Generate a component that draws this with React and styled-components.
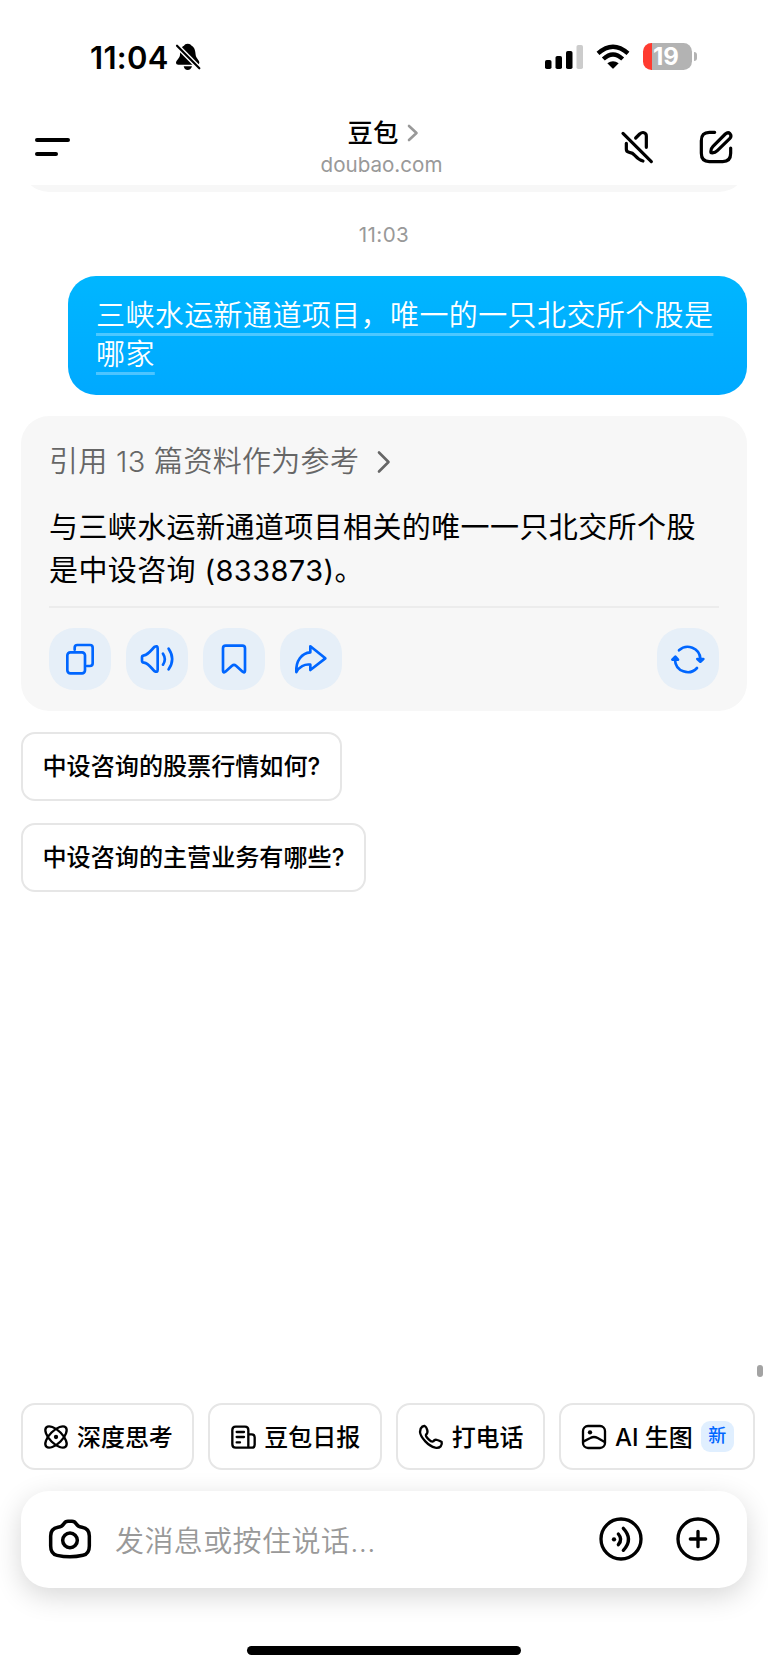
import React from 'react';
import styled, { createGlobalStyle } from 'styled-components';

const App = () => {
  return (
    <Screen>
      <GlobalStyle />
      <StatusBar>
        <StatusLeft>
          <Clock>11:04</Clock>
          <BellOffIcon />
        </StatusLeft>
        <StatusRight>
          <SignalIcon />
          <WifiIcon />
          <Battery>
            <BatteryBody>
              <BatteryLevel>19</BatteryLevel>
            </BatteryBody>
            <BatteryCap />
          </Battery>
        </StatusRight>
      </StatusBar>

      <Header>
        <MenuButton>
          <MenuLine $width={35} />
          <MenuLine $width={23} />
        </MenuButton>
        <TitleBox>
          <Title>
            豆包
            <Icon width="12" height="18" viewBox="0 0 12 18" $stroke={2.6} $color="#999">
              <path d="M2 2 9.5 9 2 16" />
            </Icon>
          </Title>
          <SubTitle>doubao.com</SubTitle>
        </TitleBox>
        <HeaderActions>
          <Icon width="34" height="34" viewBox="0 0 102 102" $stroke={9.6}>
            <path d="M9 10 94 95M47 24 59 12Q66 6 72 8Q79 10 79 18V52M19 40V58Q19 66 28 67Q38 68 44 76Q56 90 69 93" />
          </Icon>
          <Icon width="36" height="36" viewBox="0 0 108 108" $stroke={9.6}>
            <path d="M50 10H34Q10 10 10 35V73Q10 98 34 98H74Q98 98 98 73V57" />
            <path d="M39 71Q37 60 45 52L82 15Q90 8 96 14Q102 21 95 29L58 65Q50 73 39 71Z" />
          </Icon>
        </HeaderActions>
      </Header>

      <Chat>
        <PrevCard />
        <Time>11:03</Time>
        <UserBubble>
          <UserText>三峡水运新通道项目，唯一的一只北交所个股是哪家</UserText>
        </UserBubble>

        <AnswerCard>
          <Reference>
            引用 13 篇资料作为参考
            <Icon width="14" height="24" viewBox="0 0 14 24" $stroke={2.6} $color="#666">
              <path d="M2 2.5 11.5 12 2 21.5" />
            </Icon>
          </Reference>
          <AnswerText>与三峡水运新通道项目相关的唯一一只北交所个股是中设咨询 (833873)。</AnswerText>
          <Actions>
            {ACTION_DATA.map(item => (
              <ActionButton key={item.name} $last={item.name === 'refresh'}>
                <Icon width="36" height="36" viewBox="0 0 108 108" $stroke={8} $color="#0066ff">
                  {item.icon}
                </Icon>
              </ActionButton>
            ))}
          </Actions>
        </AnswerCard>

        <SuggestList>
          {SUGGEST_DATA.map(text => (
            <Suggest key={text}>{text}</Suggest>
          ))}
        </SuggestList>
        <ScrollThumb />
      </Chat>

      <Tools>
        {TOOL_DATA.map(item => (
          <Tool key={item.name}>
            <Icon width="26" height="26" viewBox="0 0 78 78" $stroke={7}>
              {item.icon}
            </Icon>
            <ToolName>{item.name}</ToolName>
            {item.badge && <Badge>{item.badge}</Badge>}
          </Tool>
        ))}
      </Tools>

      <InputBar>
        <Icon width="44" height="42" viewBox="0 0 132 126" $stroke={10.5}>
          <path d="M47 18Q52 10 60 10H72Q80 10 85 18Q90 26 102 28Q124 32 124 54V84Q124 108 105 112Q66 121 27 112Q8 108 8 84V54Q8 32 30 28Q42 26 47 18Z" />
          <circle cx="66" cy="67" r="22" />
        </Icon>
        <Placeholder>发消息或按住说话...</Placeholder>
        <Icon width="44" height="44" viewBox="0 0 132 132" $stroke={10}>
          <circle cx="66" cy="66" r="60" />
          <circle cx="45" cy="67" r="6.5" fill="#000" stroke="none" />
          <path d="M58 51Q72 67 58 83M73 34Q104 67 73 100" />
        </Icon>
        <Icon width="44" height="44" viewBox="0 0 132 132" $stroke={10}>
          <circle cx="66" cy="66" r="60" />
          <path d="M43 66H89M66 43V89" />
        </Icon>
      </InputBar>
      <HomeIndicator />
    </Screen>
  );
};

export default App;

const BellOffIcon = () => (
  <svg width="26" height="28" viewBox="0 0 78 84">
    <path d="M38 2C46 2 48 6 50 8C60 14 61 24 62 36C63 46 74 52 73 60Q72 65 66 65H10Q3 65 3 60C3 52 14 46 15 36C16 22 18 12 27 8C29 4 32 2 38 2Z" />
    <path d="M26 70H51Q48 81 38 81Q28 81 26 70Z" />
    <path d="M6 8 73 76" stroke="#fff" strokeWidth="15" />
    <path d="M6 8 73 76" stroke="#000" strokeWidth="6.5" strokeLinecap="round" />
  </svg>
);

const SignalIcon = () => (
  <svg width="38" height="24" viewBox="0 0 38 24">
    <rect x="0" y="15" width="6.5" height="9" rx="1.8" />
    <rect x="10.5" y="11" width="6.5" height="13" rx="1.8" />
    <rect x="21" y="6" width="6.5" height="18" rx="1.8" />
    <rect x="31.5" y="0" width="6.5" height="24" rx="1.8" fill="#ccc" />
  </svg>
);

const WifiIcon = () => (
  <svg width="34" height="25" viewBox="0 0 102 75">
    <path d="M6 28Q51 -12 96 28M22 45Q51 18 80 45" fill="none" stroke="#000" strokeWidth="13" />
    <path d="M34 58Q51 46 68 58L53 73Q51 75 49 73Z" />
  </svg>
);

const GlobalStyle = createGlobalStyle`
  * {
    box-sizing: border-box;
    margin: 0;
    padding: 0;
  }
  body {
    background: #fff;
    font-family: Inter, 'Noto Sans CJK SC', sans-serif;
    color: #000;
  }
`;

const Screen = styled.div`
  display: flex;
  flex-direction: column;
  width: 768px;
  height: 1669px;
  background: #fff;
  overflow: hidden;
`;

const Icon = styled.svg`
  flex: none;
  fill: none;
  stroke: ${({ $color }) => $color || '#000'};
  stroke-width: ${({ $stroke }) => $stroke};
  stroke-linecap: round;
  stroke-linejoin: round;
`;

const StatusBar = styled.div`
  display: flex;
  justify-content: space-between;
  align-items: center;
  height: 113px;
  padding: 0 71px 0 90px;
`;

const StatusLeft = styled.div`
  display: flex;
  align-items: center;
  gap: 5px;
`;

const Clock = styled.p`
  width: 80px;
  padding-top: 2px;
  font-size: 31px;
  font-weight: 600;
  line-height: 36px;
  letter-spacing: 0.3px;
  white-space: nowrap;
`;

const StatusRight = styled.div`
  display: flex;
  align-items: center;
  gap: 13px;
`;

const Battery = styled.div`
  display: flex;
  align-items: center;
  gap: 2px;
`;

const BatteryBody = styled.div`
  width: 49px;
  height: 27px;
  border-radius: 8.5px;
  background: linear-gradient(90deg, #ff3b30 9px, #b3b3b3 9px);
`;

const BatteryLevel = styled.p`
  font-size: 24px;
  font-weight: 700;
  line-height: 27px;
  padding-left: 10px;
  color: #fff;
`;

const BatteryCap = styled.div`
  width: 3px;
  height: 9px;
  border-radius: 0 4px 4px 0;
  background: #b3b3b3;
`;

const Header = styled.div`
  display: grid;
  grid-template-columns: 160px 1fr 160px;
  align-items: center;
  height: 72px;
  padding: 0 34px 0 35px;
`;

const MenuButton = styled.div`
  display: flex;
  flex-direction: column;
  gap: 10px;
  padding-bottom: 4px;
`;

const MenuLine = styled.div`
  width: ${({ $width }) => $width}px;
  height: 4px;
  border-radius: 2px;
  background: #000;
`;

const TitleBox = styled.div`
  display: flex;
  flex-direction: column;
  align-items: center;
  padding-bottom: 3px;
`;

const Title = styled.h1`
  display: flex;
  align-items: center;
  gap: 9px;
  padding-right: 2px;
  font-size: 25.4px;
  font-weight: 500;
  line-height: 35px;
`;

const SubTitle = styled.p`
  font-size: 20.6px;
  line-height: 30px;
  letter-spacing: 0;
  padding-right: 6px;
  color: #999;
`;

const HeaderActions = styled.div`
  display: flex;
  align-items: center;
  justify-content: flex-end;
  gap: 44px;
  padding-bottom: 4px;
`;

const Chat = styled.div`
  position: relative;
  display: flex;
  flex-direction: column;
  align-items: flex-start;
  height: 1218px;
  padding: 0 21px;
  overflow: hidden;
`;

// bottom edge of the message above, scrolled under the header
const PrevCard = styled.div`
  flex: none;
  width: 726px;
  height: 60px;
  margin-top: -53px;
  border-radius: 28px;
  background: #f7f7f7;
`;

const Time = styled.p`
  align-self: center;
  margin: 29px 0 27px;
  font-size: 20.6px;
  line-height: 28px;
  letter-spacing: 0.4px;
  color: #999;
`;

const UserBubble = styled.div`
  align-self: flex-end;
  width: 679px;
  height: 119px;
  padding: 21px 28px;
  border-radius: 28px;
  background: linear-gradient(#00b6ff, #00a9ff);
`;

const UserText = styled.span`
  font-size: 29px;
  font-weight: 350;
  line-height: 38.7px;
  letter-spacing: 0.4px;
  color: #fff;
  text-decoration: underline 3px rgba(255, 255, 255, 0.3);
  text-decoration-skip-ink: none;
  text-underline-offset: 6.5px;
`;

const AnswerCard = styled.div`
  flex: none;
  width: 726px;
  height: 295px;
  margin-top: 21px;
  padding: 23.5px 28px 19px;
  border-radius: 28px;
  background: #f7f7f7;
`;

const Reference = styled.p`
  display: flex;
  align-items: center;
  gap: 18px;
  font-size: 29px;
  font-weight: 350;
  line-height: 44px;
  letter-spacing: 0.3px;
  color: #666;
`;

const AnswerText = styled.p`
  height: 102px;
  margin-top: 22px;
  border-bottom: 2px solid #ececec;
  font-size: 29px;
  line-height: 43.8px;
  letter-spacing: 0.4px;
`;

const Actions = styled.div`
  display: flex;
  gap: 14.5px;
  margin-top: 20.5px;
`;

const ActionButton = styled.div`
  display: flex;
  align-items: center;
  justify-content: center;
  width: 62.4px;
  height: 62.4px;
  margin-left: ${({ $last }) => ($last ? 'auto' : '0')};
  border-radius: 25px;
  background: #e6eff8;
`;

const SuggestList = styled.div`
  display: flex;
  flex-direction: column;
  align-items: flex-start;
  gap: 22px;
  margin-top: 21px;
`;

const Suggest = styled.div`
  height: 69px;
  padding: 0 19.5px;
  border: 2px solid #e6e6e6;
  border-radius: 14px;
  font-size: 24.1px;
  font-weight: 500;
  line-height: 65px;
`;

const ScrollThumb = styled.div`
  position: absolute;
  right: 5px;
  bottom: 26px;
  width: 6px;
  height: 12.5px;
  border-radius: 3px;
  background: #a3a3a3;
`;

const Tools = styled.div`
  display: flex;
  gap: 14px;
  padding-left: 21px;
`;

const Tool = styled.div`
  display: flex;
  flex: none;
  align-items: center;
  gap: 8px;
  height: 67px;
  padding: 0 19.5px 0 20px;
  border: 2px solid #e6e6e6;
  border-radius: 14px;
`;

const ToolName = styled.span`
  padding-bottom: 2px;
  font-size: 24px;
  font-weight: 500;
  letter-spacing: -0.05px;
  white-space: nowrap;
`;

const Badge = styled.span`
  width: 33px;
  height: 31px;
  border-radius: 9px;
  background: #e0efff;
  color: #0066ff;
  font-size: 18px;
  font-weight: 500;
  line-height: 30px;
  text-align: center;
`;

const InputBar = styled.div`
  display: flex;
  align-items: center;
  gap: 33px;
  width: 726px;
  height: 97px;
  margin: 21px 0 0 21px;
  padding: 0 27px 1px;
  border-radius: 28px;
  background: #fff;
  box-shadow: 0 8px 28px rgba(0, 0, 0, 0.16);
`;

const Placeholder = styled.p`
  flex: 1;
  margin-left: -10px;
  padding-top: 6px;
  font-size: 29px;
  font-weight: 350;
  line-height: 44px;
  letter-spacing: 0.4px;
  color: #999;
`;

const HomeIndicator = styled.div`
  width: 274px;
  height: 9px;
  margin: 57.5px 0 0 247px;
  border-radius: 5px;
  background: #000;
`;

const ACTION_DATA = [
  {
    name: 'copy',
    icon: (
      <>
        <path d="M38 26V20Q38 12 46 12H84Q92 12 92 20V67Q92 75 84 75H75" />
        <rect x="16" y="34" width="53" height="63" rx="9" />
      </>
    ),
  },
  {
    name: 'speak',
    icon: (
      <>
        <path d="M9 49Q9 44 15 43C28 41 36 28 46 18Q56 12 56 22V86Q56 96 46 90C36 80 28 67 15 65Q9 64 9 59Z" />
        <path d="M72 38Q83 55 72 71M89 23Q110 54 89 85" />
      </>
    ),
  },
  {
    name: 'bookmark',
    icon: (
      <path d="M21 22Q21 14 29 14H79Q87 14 87 22V89Q87 97 80 92L60 74Q54 69 48 74L28 92Q21 97 21 89Z" />
    ),
  },
  {
    name: 'share',
    icon: <path d="M10 93C8 60 26 36 52 34V16L97 52L52 87V71C35 68 18 78 10 93Z" />,
  },
  {
    name: 'refresh',
    icon: (
      <>
        <path d="M27 28A38 38 0 0 1 91 53M15 57A38 38 0 0 0 81 81" />
        <path d="M82 54H100L91 62ZM7 56H24L16 47Z" fill="#0066ff" />
      </>
    ),
  },
];

const SUGGEST_DATA = ['中设咨询的股票行情如何?', '中设咨询的主营业务有哪些?'];

const TOOL_DATA = [
  {
    name: '深度思考',
    icon: (
      <>
        <ellipse cx="39" cy="39" rx="41" ry="19" transform="rotate(45 39 39)" />
        <ellipse cx="39" cy="39" rx="41" ry="19" transform="rotate(-45 39 39)" />
        <circle cx="39" cy="39" r="6.5" fill="#000" stroke="none" />
      </>
    ),
  },
  {
    name: '豆包日报',
    icon: (
      <>
        <path d="M55 71H17Q7 71 7 61V18Q7 8 17 8H45Q55 8 55 18V71H65Q74 71 74 62V40Q74 31 65 31H55" />
        <path d="M20 24H42M20 39H42M20 55H30" />
      </>
    ),
  },
  {
    name: '打电话',
    icon: (
      <path d="M8 14Q13 5 20 6Q25 8 28 19Q30 27 24 32Q22 37 32 46Q41 55 46 52Q50 45 58 48Q67 51 71 54Q73 59 68 67Q62 73 52 71Q36 67 22 52Q7 36 6 24Z" />
    ),
  },
  {
    name: 'AI 生图',
    badge: '新',
    icon: (
      <>
        <rect x="6" y="6" width="66" height="66" rx="15" />
        <circle cx="27" cy="25" r="6.5" fill="#000" stroke="none" />
        <path d="M8 52 28 42Q39 36 50 42L71 54" />
      </>
    ),
  },
];
